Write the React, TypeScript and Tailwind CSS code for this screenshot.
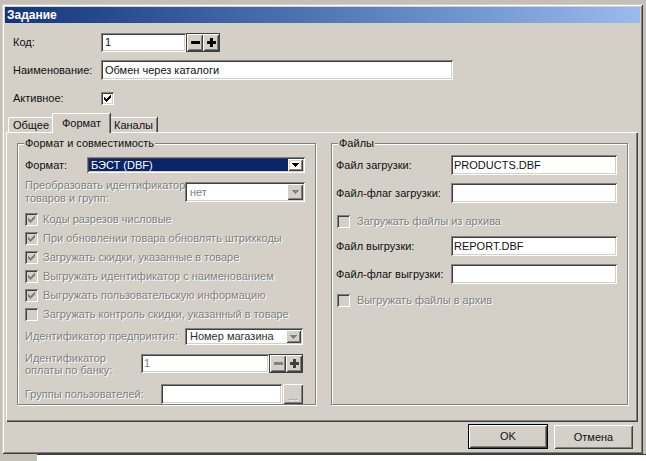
import React from "react";

const sunken =
  "shadow-[inset_1px_1px_0_#808080,inset_-1px_-1px_0_#ffffff,inset_2px_2px_0_#404040,inset_-2px_-2px_0_#d4d0c8]";
const raised =
  "shadow-[inset_1px_1px_0_#ffffff,inset_-1px_-1px_0_#404040,inset_2px_2px_0_#d4d0c8,inset_-2px_-2px_0_#808080]";
const dis = "text-[#808080] [text-shadow:1px_1px_0_#ffffff]";

function CheckMark({ color }: { color: string }) {
  return (
    <svg width="7" height="7" viewBox="0 0 7 7" shapeRendering="crispEdges">
      <polygon points="0,2 2,4 7,-1 7,2 2,7 0,5" fill={color} />
    </svg>
  );
}

function Check({ checked, disabled }: { checked?: boolean; disabled?: boolean }) {
  return (
    <div
      className={`w-[13px] h-[13px] shrink-0 flex items-center justify-center ${sunken} ${
        disabled ? "bg-[#d4d0c8]" : "bg-white"
      }`}
    >
      {checked && <CheckMark color={disabled ? "#808080" : "#000000"} />}
    </div>
  );
}

function Arrow({ color }: { color: string }) {
  return (
    <svg width="7" height="4" viewBox="0 0 7 4" shapeRendering="crispEdges">
      <polygon points="0,0 7,0 3.5,4" fill={color} />
    </svg>
  );
}

function Minus({ color }: { color: string }) {
  return (
    <svg width="9" height="9" viewBox="0 0 9 9" shapeRendering="crispEdges">
      <rect x="0" y="3" width="9" height="3" fill={color} />
    </svg>
  );
}

function Plus({ color }: { color: string }) {
  return (
    <svg width="9" height="9" viewBox="0 0 9 9" shapeRendering="crispEdges">
      <rect x="0" y="3" width="9" height="3" fill={color} />
      <rect x="3" y="0" width="3" height="9" fill={color} />
    </svg>
  );
}

function Group({
  title,
  className,
  children,
}: {
  title: string;
  className: string;
  children: React.ReactNode;
}) {
  return (
    <div
      className={`relative border border-[#808080] shadow-[inset_1px_1px_0_#ffffff,1px_1px_0_#ffffff] ${className}`}
    >
      <div className="absolute left-[6px] top-[-8px] bg-[#d4d0c8] px-[1px] leading-[14px]">{title}</div>
      {children}
    </div>
  );
}

export default function App() {
  return (
    <div className="w-[646px] h-[461px] bg-[#c4c0b8] pt-[4px] pl-[2px] font-['Liberation_Sans',Arial,sans-serif] text-[11px] text-[#111111] whitespace-nowrap overflow-hidden">
      <div
        className={`w-[641px] h-[450px] bg-[#d4d0c8] p-[3px] flex flex-col shadow-[inset_1px_1px_0_#d4d0c8,inset_-1px_-1px_0_#404040,inset_2px_2px_0_#ffffff,inset_-2px_-2px_0_#808080]`}
      >
        {/* title bar */}
        <div className="h-[16px] bg-gradient-to-r from-[#14357c] to-[#98bcee] text-white font-bold text-[12px] leading-[16px] pl-[2px]">
          Задание
        </div>

        {/* top fields */}
        <div className="pl-[8px] flex flex-col">
          <div className="mt-[10px] h-[19px] flex items-center">
            <div className="w-[88px]">Код:</div>
            <div className={`w-[85px] h-[19px] bg-white ${sunken} pl-[4px] leading-[19px]`}>1</div>
            <div className="h-[19px] border border-[#404040] flex">
              <div className={`w-[16px] h-[17px] ${raised} flex items-center justify-center`}>
                <Minus color="#000000" />
              </div>
              <div className={`w-[16px] h-[17px] ${raised} flex items-center justify-center`}>
                <Plus color="#000000" />
              </div>
            </div>
          </div>
          <div className="mt-[8px] h-[20px] flex items-center">
            <div className="w-[88px]">Наименование:</div>
            <div className={`w-[352px] h-[20px] bg-white ${sunken} pl-[4px] leading-[20px]`}>
              Обмен через каталоги
            </div>
          </div>
          <div className="mt-[12px] h-[13px] flex items-center">
            <div className="w-[88px]">Активное:</div>
            <Check checked />
          </div>
        </div>

        {/* tabs */}
        <div className="mt-[8px] ml-[1px] flex items-end h-[19px] pl-[2px] relative z-10">
          <div className="h-[15px] w-[45px] border-t border-l border-white rounded-tl-[2px] shadow-[inset_-1px_0_0_#808080,1px_0_0_#404040] flex items-center justify-center leading-[14px]">
            Общее
          </div>
          <div className="h-[20px] w-[58px] -ml-[1px] -mr-[1px] mb-[-1px] border-t border-l border-white rounded-tl-[2px] bg-[#d4d0c8] shadow-[inset_-1px_0_0_#808080,1px_0_0_#404040] flex items-start justify-center pt-[2px] leading-[14px] z-10">
            Формат
          </div>
          <div className="h-[15px] w-[48px] border-t border-l border-white rounded-tl-[2px] shadow-[inset_-1px_0_0_#808080,1px_0_0_#404040] flex items-center justify-center leading-[14px]">
            Каналы
          </div>
        </div>

        {/* tab panel */}
        <div className="ml-[1px] w-[631px] h-[289px] border-t border-l border-white shadow-[inset_-1px_-1px_0_#808080,1px_1px_0_#404040] flex gap-[15px] pl-[10px] pt-[10px]">
          {/* left group */}
          <Group title="Формат и совместимость" className="w-[299px] h-[262px]">
            <div className="flex flex-col pl-[7px] pr-[10px]">
              <div className="mt-[13px] h-[16px] flex items-center">
                <div className="w-[62px]">Формат:</div>
                <div className={`w-[218px] h-[16px] bg-white ${sunken} flex p-[2px]`}>
                  <div className="flex-1 bg-[#0a246a] text-white leading-[12px] pl-[2px]">БЭСТ (DBF)</div>
                  <div className={`w-[15px] h-[12px] ${raised} flex items-center justify-center`}>
                    <Arrow color="#000000" />
                  </div>
                </div>
              </div>
              <div className="mt-[9px] h-[20px] flex items-center">
                <div className={`w-[160px] leading-[13px] ${dis}`}>
                  Преобразовать идентификатор
                  <br />
                  товаров и групп:
                </div>
                <div className={`w-[120px] h-[20px] bg-white ${sunken} flex p-[2px]`}>
                  <div className={`flex-1 leading-[16px] pl-[3px] ${dis}`}>нет</div>
                  <div className={`w-[16px] h-[16px] ${raised} bg-[#d4d0c8] flex items-center justify-center`}>
                    <Arrow color="#808080" />
                  </div>
                </div>
              </div>
              <div className="mt-[8px] flex flex-col">
                {[
                  ["Коды разрезов числовые", true],
                  ["При обновлении товара обновлять штрихкоды", true],
                  ["Загружать скидки, указанные в товаре", true],
                  ["Выгружать идентификатор с наименованием", true],
                  ["Выгружать пользовательскую информацию", true],
                  ["Загружать контроль скидки, указанный в товаре", false],
                ].map(([t, c]) => (
                  <div key={t as string} className="h-[19px] flex items-center gap-[5px]">
                    <Check checked={c as boolean} disabled />
                    <span className={dis}>{t as string}</span>
                  </div>
                ))}
              </div>
              <div className="mt-[4px] h-[17px] flex items-center">
                <div className={`w-[160px] ${dis}`}>Идентификатор предприятия:</div>
                <div className={`w-[118px] h-[17px] bg-white ${sunken} flex p-[2px]`}>
                  <div className="flex-1 leading-[13px] pl-[3px] text-[#303030]">Номер магазина</div>
                  <div className={`w-[15px] h-[13px] ${raised} bg-[#d4d0c8] flex items-center justify-center`}>
                    <Arrow color="#808080" />
                  </div>
                </div>
              </div>
              <div className="mt-[9px] h-[19px] flex items-center">
                <div className={`w-[116px] leading-[12px] ${dis}`}>
                  Идентификатор
                  <br />
                  оплаты по банку:
                </div>
                <div className={`w-[128px] h-[19px] bg-white ${sunken} pl-[3px] leading-[19px] ${dis}`}>1</div>
                <div className="h-[19px] border border-[#404040] flex">
                  <div className={`w-[16px] h-[17px] ${raised} flex items-center justify-center`}>
                    <Minus color="#808080" />
                  </div>
                  <div className={`w-[16px] h-[17px] ${raised} flex items-center justify-center`}>
                    <Plus color="#404040" />
                  </div>
                </div>
              </div>
              <div className="mt-[11px] h-[20px] flex items-center">
                <div className={`w-[136px] ${dis}`}>Группы пользователей:</div>
                <div className={`w-[121px] h-[20px] bg-white ${sunken}`}></div>
                <div
                  className={`ml-[1px] w-[20px] h-[20px] ${raised} flex items-end justify-center pb-[3px] leading-[10px] ${dis}`}
                >
                  ...
                </div>
              </div>
            </div>
          </Group>

          {/* right group */}
          <Group title="Файлы" className="w-[297px] h-[262px]">
            <div className="flex flex-col pl-[4px] pr-[9px]">
              <div className="mt-[11px] h-[20px] flex items-center">
                <div className="w-[115px]">Файл загрузки:</div>
                <div className={`w-[166px] h-[20px] bg-white ${sunken} pl-[3px] leading-[20px]`}>PRODUCTS.DBF</div>
              </div>
              <div className="mt-[8px] h-[20px] flex items-center">
                <div className="w-[115px]">Файл-флаг загрузки:</div>
                <div className={`w-[166px] h-[20px] bg-white ${sunken}`}></div>
              </div>
              <div className="mt-[12px] h-[13px] flex items-center gap-[7px] pl-[1px]">
                <Check disabled />
                <span className={dis}>Загружать файлы из архива</span>
              </div>
              <div className="mt-[8px] h-[20px] flex items-center">
                <div className="w-[115px]">Файл выгрузки:</div>
                <div className={`w-[166px] h-[20px] bg-white ${sunken} pl-[3px] leading-[20px]`}>REPORT.DBF</div>
              </div>
              <div className="mt-[8px] h-[20px] flex items-center">
                <div className="w-[115px]">Файл-флаг выгрузки:</div>
                <div className={`w-[166px] h-[20px] bg-white ${sunken}`}></div>
              </div>
              <div className="mt-[10px] h-[13px] flex items-center gap-[7px] pl-[1px]">
                <Check disabled />
                <span className={dis}>Выгружать файлы в архив</span>
              </div>
            </div>
          </Group>
        </div>

        {/* buttons */}
        <div className="mt-[3px] flex justify-end gap-[6px] pr-[7px]">
          <div className="w-[80px] h-[25px] border border-black">
            <div className={`w-full h-full ${raised} flex items-center justify-center`}>OK</div>
          </div>
          <div className={`w-[79px] h-[24px] mt-[1px] ${raised} flex items-center justify-center`}>Отмена</div>
        </div>
      </div>
      <div className="ml-[35px] h-[7px] bg-white border-t border-[#404040]"></div>
    </div>
  );
}
